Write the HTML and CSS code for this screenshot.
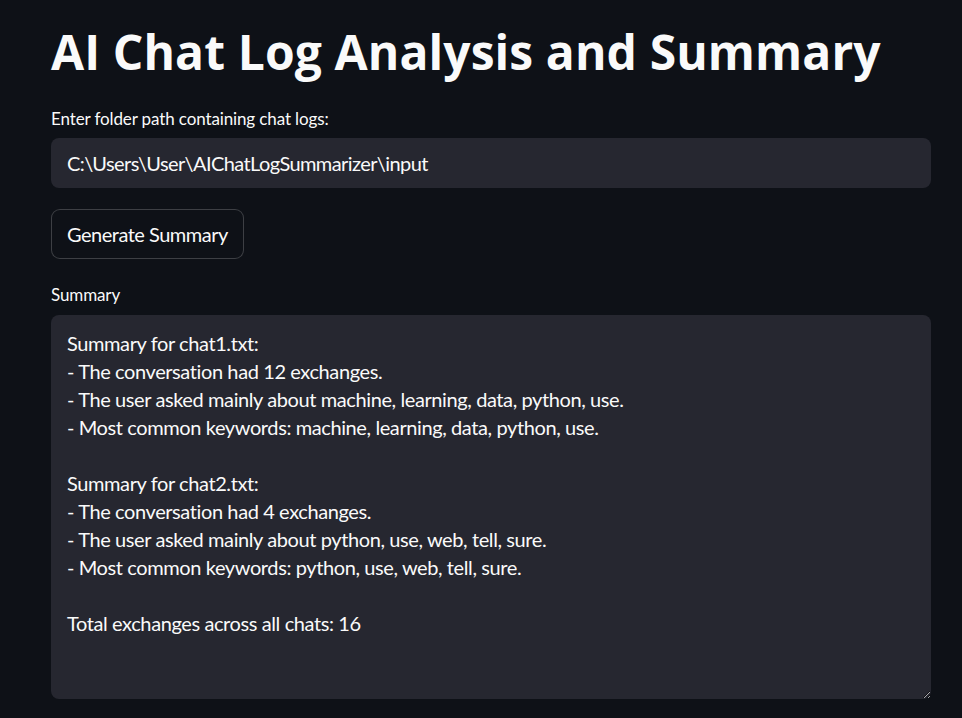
FILE: index.html
```html
<!DOCTYPE html>
<html lang="en">
<head>
<meta charset="utf-8">
<title>AI Chat Log Analysis and Summary</title>
<link rel="stylesheet" href="styles.css">
</head>
<body>
<main class="app">
  <h1 class="title">AI Chat Log Analysis and Summary</h1>
  <label class="field-label" for="folder">Enter folder path containing chat logs:</label>
  <input id="folder" class="text-input" type="text" value="C:\Users\User\AIChatLogSummarizer\input">
  <button class="btn" type="button">Generate Summary</button>
  <label class="field-label summary-label" for="summary">Summary</label>
  <textarea id="summary" class="text-area" readonly>Summary for chat1.txt:
- The conversation had 12 exchanges.
- The user asked mainly about machine, learning, data, python, use.
- Most common keywords: machine, learning, data, python, use.

Summary for chat2.txt:
- The conversation had 4 exchanges.
- The user asked mainly about python, use, web, tell, sure.
- Most common keywords: python, use, web, tell, sure.

Total exchanges across all chats: 16</textarea>
</main>
</body>
</html>
```

FILE: styles.css
```css
html, body {
  margin: 0;
  padding: 0;
  background: #0e1117;
  color: #fafafa;
  font-family: Lato, "Noto Sans", sans-serif;
  color-scheme: dark;
}

.app {
  width: 880px;
  padding: 22px 31px 0 51px;
  display: flex;
  flex-direction: column;
  align-items: flex-start;
}

.title {
  margin: 0;
  font-family: "Open Sans", Lato, sans-serif;
  font-size: 48px;
  line-height: 59px;
  font-weight: 700;
  letter-spacing: 0.1px;
  white-space: nowrap;
}

.field-label {
  margin-top: 26px;
  font-size: 17px;
  line-height: 24px;
  letter-spacing: -0.12px;
}

.text-input {
  margin-top: 7px;
  box-sizing: border-box;
  width: 880px;
  height: 50px;
  border: none;
  border-radius: 8px;
  background: #262730;
  color: #fafafa;
  font-family: inherit;
  font-size: 20px;
  letter-spacing: -0.6px;
  padding: 0 16px;
  outline: none;
}

.btn {
  margin-top: 21px;
  box-sizing: border-box;
  height: 50px;
  width: 193px;
  padding: 0 15px;
  border: 1px solid rgba(250, 250, 250, 0.2);
  border-radius: 9px;
  background: #0e1117;
  color: #fafafa;
  font-family: inherit;
  font-size: 20px;
  letter-spacing: -0.5px;
  text-align: left;
  white-space: nowrap;
}

.summary-label {
  margin-top: 24px;
}

.text-area {
  margin-top: 8px;
  box-sizing: border-box;
  width: 880px;
  height: 384px;
  border: none;
  border-radius: 8px;
  background: #262730;
  color: #fafafa;
  font-family: inherit;
  font-size: 20px;
  line-height: 28px;
  letter-spacing: -0.4px;
  padding: 14px 16px;
  outline: none;
  resize: vertical;
}
```
